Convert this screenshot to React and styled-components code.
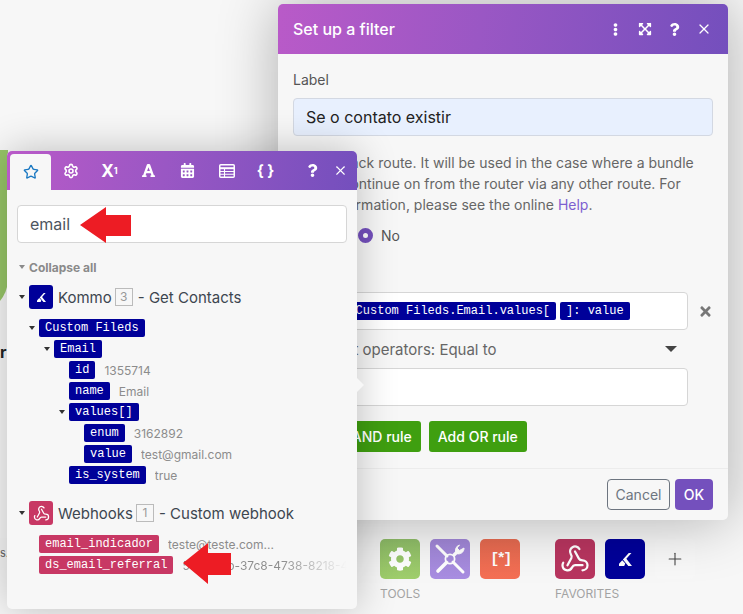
import React from "react";
import styled, { createGlobalStyle } from "styled-components";
import { Star, Settings, X, Webhook, Plus } from "lucide-react";
import {
  FaCalendarAlt,
  FaCog,
  FaEllipsisV,
  FaExpandArrowsAlt,
  FaFont,
  FaQuestion,
  FaTimes,
} from "react-icons/fa";

const NAVY = "#000099";
const ROSE = "#c83864";
const HEADER = "linear-gradient(98deg, #b95ac8 0%, #9a57c4 45%, #744fbd 100%)";

const Global = createGlobalStyle`
  html, body { margin: 0; padding: 0; background: #f7f7f7; }
  * { box-sizing: border-box; }
  body { font-family: Inter, "Noto Sans", sans-serif; }
`;

const Scene = styled.div`
  position: relative;
  width: 743px;
  height: 614px;
  overflow: hidden;
  background: #f7f7f7;
`;

/* what is left of the editor behind the windows */
const GreenNode = styled.div`
  position: absolute;
  left: -60px;
  top: 150px;
  width: 68px;
  height: 163px;
  border-radius: 0 0 34px 0;
  background: #97c667;
`;
const NodeName = styled.div`
  position: absolute;
  left: 0;
  top: 342px;
  font-size: 16px;
  font-weight: 700;
  color: #222;
`;
const Note = styled.div`
  position: absolute;
  left: 0;
  top: 538px;
  width: 40px;
  height: 32px;
  padding-top: 8px;
  background: #f5f5f5;
  font-size: 11px;
  color: #666;
`;

const Dock = styled.div`
  position: absolute;
  left: 380px;
  top: 539px;
  display: flex;
  gap: 35px;
`;
const DockGroup = styled.div`
  display: flex;
  flex-direction: column;
  gap: 7px;
`;
const DockTiles = styled.div`
  display: flex;
  gap: 10px;
`;
const DockLabel = styled.div`
  font-size: 12px;
  line-height: 16px;
  color: #a3a3a3;
`;
const Tile = styled.div`
  display: flex;
  align-items: center;
  justify-content: center;
  width: 40px;
  height: 40px;
  border-radius: 5px;
  color: ${(p) => p.$fg || "#fff"};
  background: ${(p) => p.$bg};
`;
const BracketMark = styled.span`
  font-family: "Liberation Mono", monospace;
  font-size: 15px;
  font-weight: 700;
  letter-spacing: -2.5px;
`;

/* filter dialog */
const Dialog = styled.section`
  position: absolute;
  left: 278px;
  top: 4px;
  display: flex;
  flex-direction: column;
  width: 450px;
  height: 516px;
  border-radius: 5px;
  background: #f7f7f7;
  box-shadow: 0 0 60px rgba(0, 0, 0, 0.3);
`;
const DialogHeader = styled.header`
  display: flex;
  align-items: center;
  height: 50px;
  padding: 0 9px 0 15px;
  border-radius: 5px 5px 0 0;
  background: ${HEADER};
  color: #fff;
`;
const DialogTitle = styled.h2`
  flex: 1;
  margin: 0;
  font-size: 16px;
  font-weight: 500;
`;
const HeadButton = styled.span`
  display: flex;
  align-items: center;
  justify-content: center;
  width: 29.5px;
  height: 30px;
  color: #fff;
`;
const DialogBody = styled.div`
  flex: 1;
  padding: 16px 15px 0;
`;
const FieldLabel = styled.label`
  display: block;
  font-size: 14px;
  line-height: 20px;
  color: #555;
`;
const LabelInput = styled.div`
  height: 38px;
  margin-top: 8px;
  padding-left: 12px;
  border: 1px solid #d3d8e2;
  border-radius: 4px;
  background: #e8f0fe;
  font-size: 16px;
  line-height: 36px;
  color: #222;
`;
const HelpText = styled.p`
  margin: 16px 0 0;
  font-size: 14px;
  line-height: 21px;
  color: #666;
`;
const HelpLink = styled.a`
  color: #7d5fd0;
`;
const RadioRow = styled.div`
  display: flex;
  align-items: center;
  gap: 8px;
  height: 20px;
  margin-top: 10px;
  font-size: 14px;
  color: #555;
`;
const Radio = styled.span`
  width: 15px;
  height: 15px;
  margin-left: ${(p) => (p.$spaced ? "10px" : "0")};
  border-radius: 50%;
  border: ${(p) => (p.$on ? "5px solid #7450bd" : "1px solid #aaa")};
  background: #fff;
`;
const RuleRow = styled.div`
  display: flex;
  align-items: center;
  gap: 10px;
  margin-top: 47px;
  color: #777;
`;
const Field = styled.div`
  display: flex;
  align-items: center;
  gap: 4px;
  width: 395px;
  height: 38px;
  margin-top: ${(p) => p.$top || "0"};
  padding-left: 34px;
  border: 1px solid #d6d6d6;
  border-radius: 4px;
  background: #fff;
`;
const Select = styled.div`
  display: flex;
  align-items: center;
  justify-content: space-between;
  width: 395px;
  height: 20px;
  margin-top: 9px;
  padding: 0 11px 0 35px;
  font-size: 15px;
  color: #666;
`;
const SelectCaret = styled.span`
  border-style: solid;
  border-width: 6px 6px 0;
  border-color: #444 transparent transparent;
`;
const ButtonRow = styled.div`
  display: flex;
  gap: 8px;
  margin-top: 15px;
  padding-left: 19px;
`;
const GreenButton = styled.button`
  height: 31px;
  padding: 0 9px;
  border: 0;
  border-radius: 3px;
  background: #3f9f10;
  color: #fff;
  font: 500 14px Inter, sans-serif;
`;
const DialogFooter = styled.footer`
  display: flex;
  justify-content: flex-end;
  gap: 5px;
  padding: 10px 15px;
  border-top: 1px solid #ececec;
`;
const CancelButton = styled.button`
  width: 63px;
  height: 31px;
  border: 1px solid #6d7580;
  border-radius: 4px;
  background: transparent;
  color: #6d7580;
  font: 400 14px Inter, sans-serif;
`;
const OkButton = styled.button`
  width: 38px;
  height: 31px;
  border: 0;
  border-radius: 4px;
  background: #7450bd;
  color: #fff;
  font: 500 14px Inter, sans-serif;
`;

/* mapping panel */
const Panel = styled.aside`
  position: absolute;
  left: 7px;
  top: 151px;
  width: 350px;
  height: 458px;
  border-radius: 5px;
  background: #f7f7f7;
  box-shadow: 0 0 40px rgba(0, 0, 0, 0.24);

  &::after {
    content: "";
    position: absolute;
    right: -7px;
    top: 227px;
    border-style: solid;
    border-width: 7px 0 7px 7px;
    border-color: transparent transparent transparent #f7f7f7;
  }
`;
const Tabs = styled.nav`
  display: flex;
  align-items: flex-end;
  height: 39px;
  padding: 0 3px;
  border-radius: 5px 5px 0 0;
  background: ${HEADER};
`;
const Tab = styled.span`
  display: flex;
  align-items: center;
  justify-content: center;
  width: ${(p) => (p.$active ? "41px" : p.$narrow ? "28px" : "39px")};
  height: ${(p) => (p.$active ? "36px" : "39px")};
  margin-left: ${(p) => (p.$push ? "auto" : "0")};
  border-radius: 4px 4px 0 0;
  background: ${(p) => (p.$active ? "#f7f7f7" : "transparent")};
  color: ${(p) => (p.$active ? "#1a78c2" : "#fff")};
  font-weight: 700;
  font-size: ${(p) => p.$text || "15px"};
`;
const Sup = styled.sup`
  font-size: 9px;
  line-height: 0;
`;
const PanelBody = styled.div`
  padding: 15px 10px 0;
`;
const Search = styled.div`
  height: 38px;
  padding-left: 12px;
  border: 1px solid #d6d6d6;
  border-radius: 4px;
  background: #fff;
  font-size: 16px;
  line-height: 37px;
  color: #4c5560;
`;
const Collapse = styled.div`
  display: flex;
  align-items: center;
  gap: 4px;
  height: 16px;
  margin-top: 16px;
  padding-left: 2px;
  font-size: 12px;
  font-weight: 700;
  color: #8a8a8a;
`;
const Caret = styled.span`
  flex: none;
  width: 0;
  height: 0;
  border-style: solid;
  border-width: 4px 3px 0;
  border-color: ${(p) => p.$color || "#333"} transparent transparent;
`;
const ModuleRow = styled.div`
  display: flex;
  align-items: center;
  height: 24px;
  margin-top: ${(p) => p.$top};
  padding-left: 2px;
  font-size: 15px;
  color: #3d4650;
`;
const ModuleIcon = styled.span`
  display: flex;
  align-items: center;
  justify-content: center;
  width: 24px;
  height: 24px;
  margin: 0 5px 0 4px;
  border-radius: 3px;
  background: ${(p) => p.$bg};
  color: #fff;
`;
const Count = styled.span`
  width: 18px;
  height: 18px;
  margin: 0 5px 0 3px;
  border: 1px solid #bbb;
  font-size: 12px;
  line-height: 16px;
  text-align: center;
  color: #999;
`;
const Tree = styled.div`
  display: flex;
  flex-direction: column;
  gap: 3px;
  margin-top: 10px;
`;
const TreeRow = styled.div`
  display: flex;
  align-items: center;
  height: 18px;
  padding-left: ${(p) => 22 + p.$level * 15}px;
`;
const TreeCaret = styled(Caret)`
  margin: 0 4px 0 -10px;
`;
const Pill = styled.span`
  flex: none;
  height: 18px;
  padding: 0 6px;
  border-radius: 2px;
  background: ${(p) => p.$bg || NAVY};
  color: #fff;
  font-family: "Liberation Mono", "Courier New", monospace;
  font-size: 12px;
  line-height: 18px;
  white-space: pre;
`;
const Value = styled.span`
  flex: 1;
  min-width: 0;
  margin-left: 9px;
  overflow: hidden;
  white-space: nowrap;
  font-size: 12px;
  color: ${(p) => (p.$fade ? "transparent" : "#8c8c8c")};
  background: ${(p) =>
    p.$fade ? "linear-gradient(90deg, #8c8c8c 60%, #f7f7f7 100%)" : "none"};
  -webkit-background-clip: ${(p) => (p.$fade ? "text" : "border-box")};
  background-clip: ${(p) => (p.$fade ? "text" : "border-box")};
`;

const Arrow = styled.svg`
  position: absolute;
  left: ${(p) => p.$x}px;
  top: ${(p) => p.$y}px;
  fill: #ed1c24;
`;

const kommoFields = [
  { name: "Custom Fileds", level: 0, open: true },
  { name: "Email", level: 1, open: true },
  { name: "id", level: 2, value: "1355714" },
  { name: "name", level: 2, value: "Email" },
  { name: "values[]", level: 2, open: true },
  { name: "enum", level: 3, value: "3162892" },
  { name: "value", level: 3, value: "test@gmail.com" },
  { name: "is_system", level: 2, value: "true" },
];

const webhookFields = [
  { name: "email_indicador", level: 0, value: "teste@teste.com..." },
  {
    name: "ds_email_referral",
    level: 0,
    value: "5f3a19eb-37c8-4738-8218-4d1c07ab",
    fade: true,
  },
];

const KommoMark = ({ size }) => (
  <svg width={size} height={size} viewBox="0 0 12 12" fill="#fff">
    <path d="M9 0H11.5L6.8 5.4 12 12H8.6L3.6 6Z" />
    <path d="M3 6.6 5.8 9.8 4.8 12H0V10Z" />
  </svg>
);

const TableMark = () => (
  <svg width="16" height="14" viewBox="0 0 16 14" fill="none" stroke="#fff">
    <rect x="0.75" y="0.75" width="14.5" height="12.5" rx="1" strokeWidth="1.5" />
    <path d="M1 4.2H15" strokeWidth="2" />
    <path d="M1 7.5H15M1 10.3H15M5.5 4V13" strokeWidth="1.1" />
  </svg>
);

const ToolsMark = () => (
  <svg width="34" height="34" viewBox="0 0 34 34" fill="none" stroke="#fff">
    <path d="M4 4 14 14M20 20 30 30" strokeWidth="3" strokeLinecap="round" />
    <path d="M13.5 20.5 5 29" strokeWidth="3.6" strokeLinecap="round" />
    <path d="M20.5 13.5 25 9" strokeWidth="3.2" />
    <path
      d="M31 6a5.5 5.5 0 0 1-7.5 5.5 5.5 5.5 0 0 1 3-8.5L24 6l2.5 2.5z"
      fill="#fff"
      strokeWidth="1"
    />
    <circle cx="17" cy="17" r="4.6" strokeWidth="1.8" />
  </svg>
);

const FieldRows = ({ fields, bg }) => (
  <Tree>
    {fields.map((f) => (
      <TreeRow key={f.name} $level={f.level}>
        {f.open && <TreeCaret />}
        <Pill $bg={bg}>{f.name}</Pill>
        {f.value && <Value $fade={f.fade}>{f.value}</Value>}
      </TreeRow>
    ))}
  </Tree>
);

export default function App() {
  return (
    <Scene>
      <Global />
      <GreenNode />
      <NodeName>r</NodeName>
      <Note>s.</Note>

      <Dock>
        <DockGroup>
          <DockTiles>
            <Tile $bg="linear-gradient(#8fbd68, #a0cf6c)">
              <FaCog size={24} />
            </Tile>
            <Tile $bg="linear-gradient(#a086d6, #a98ee2)">
              <ToolsMark />
            </Tile>
            <Tile $bg="linear-gradient(#e56a50, #f56f54)">
              <BracketMark>[*]</BracketMark>
            </Tile>
          </DockTiles>
          <DockLabel>TOOLS</DockLabel>
        </DockGroup>
        <DockGroup>
          <DockTiles>
            <Tile $bg="#b8355f">
              <Webhook size={30} strokeWidth={1.8} />
            </Tile>
            <Tile $bg={NAVY}>
              <KommoMark size={13} />
            </Tile>
            <Tile $bg="#f8f8f8" $fg="#444">
              <Plus size={20} strokeWidth={1.3} />
            </Tile>
          </DockTiles>
          <DockLabel>FAVORITES</DockLabel>
        </DockGroup>
      </Dock>

      <Dialog>
        <DialogHeader>
          <DialogTitle>Set up a filter</DialogTitle>
          <HeadButton>
            <FaEllipsisV size={13} />
          </HeadButton>
          <HeadButton>
            <FaExpandArrowsAlt size={14} />
          </HeadButton>
          <HeadButton>
            <FaQuestion size={13} />
          </HeadButton>
          <HeadButton>
            <X size={16} strokeWidth={1.8} />
          </HeadButton>
        </DialogHeader>
        <DialogBody>
          <FieldLabel>Label</FieldLabel>
          <LabelInput>Se o contato existir</LabelInput>
          <HelpText>
            The fallback route. It will be used in the case where a bundle
            <br />
            cannot continue on from the router via any other route. For
            <br />
            more information, please see the online <HelpLink>Help</HelpLink>.
          </HelpText>
          <RadioRow>
            <Radio />
            Yes
            <Radio $on $spaced />
            No
          </RadioRow>
          <RuleRow>
            <Field>
              <Pill>3. Custom Fileds.Email.values[</Pill>
              <Pill>]: value</Pill>
            </Field>
            <FaTimes size={15} />
          </RuleRow>
          <Select>
            Text operators: Equal to
            <SelectCaret />
          </Select>
          <Field $top="9px" />
          <ButtonRow>
            <GreenButton>Add AND rule</GreenButton>
            <GreenButton>Add OR rule</GreenButton>
          </ButtonRow>
        </DialogBody>
        <DialogFooter>
          <CancelButton>Cancel</CancelButton>
          <OkButton>OK</OkButton>
        </DialogFooter>
      </Dialog>

      <Panel>
        <Tabs>
          <Tab $active>
            <Star size={16} strokeWidth={2} />
          </Tab>
          <Tab>
            <Settings size={16} strokeWidth={2.4} />
          </Tab>
          <Tab $text="17px">
            X<Sup>1</Sup>
          </Tab>
          <Tab>
            <FaFont size={15} />
          </Tab>
          <Tab>
            <FaCalendarAlt size={15} />
          </Tab>
          <Tab>
            <TableMark />
          </Tab>
          <Tab>{"{ }"}</Tab>
          <Tab $narrow $push>
            <FaQuestion size={13} />
          </Tab>
          <Tab $narrow>
            <X size={15} strokeWidth={1.8} />
          </Tab>
        </Tabs>
        <PanelBody>
          <Search>email</Search>
          <Collapse>
            <Caret $color="#8a8a8a" />
            Collapse all
          </Collapse>
          <ModuleRow $top="10px">
            <Caret />
            <ModuleIcon $bg={NAVY}>
              <KommoMark size={9} />
            </ModuleIcon>
            Kommo
            <Count>3</Count>- Get Contacts
          </ModuleRow>
          <FieldRows fields={kommoFields} />
          <ModuleRow $top="17px">
            <Caret />
            <ModuleIcon $bg={ROSE}>
              <Webhook size={17} strokeWidth={1.8} />
            </ModuleIcon>
            Webhooks
            <Count>1</Count>- Custom webhook
          </ModuleRow>
          <FieldRows fields={webhookFields} bg={ROSE} />
        </PanelBody>
      </Panel>

      <Arrow $x={80} $y={207} width="52" height="36" viewBox="0 0 52 36">
        <polygon points="0,18 26,0 26,8 51,8 51,29 26,29 26,36" />
      </Arrow>
      <Arrow $x={183} $y={543} width="49" height="41" viewBox="0 0 49 41">
        <polygon points="0,20 25,0 25,10 48,10 48,32 25,32 25,41" />
      </Arrow>
    </Scene>
  );
}
